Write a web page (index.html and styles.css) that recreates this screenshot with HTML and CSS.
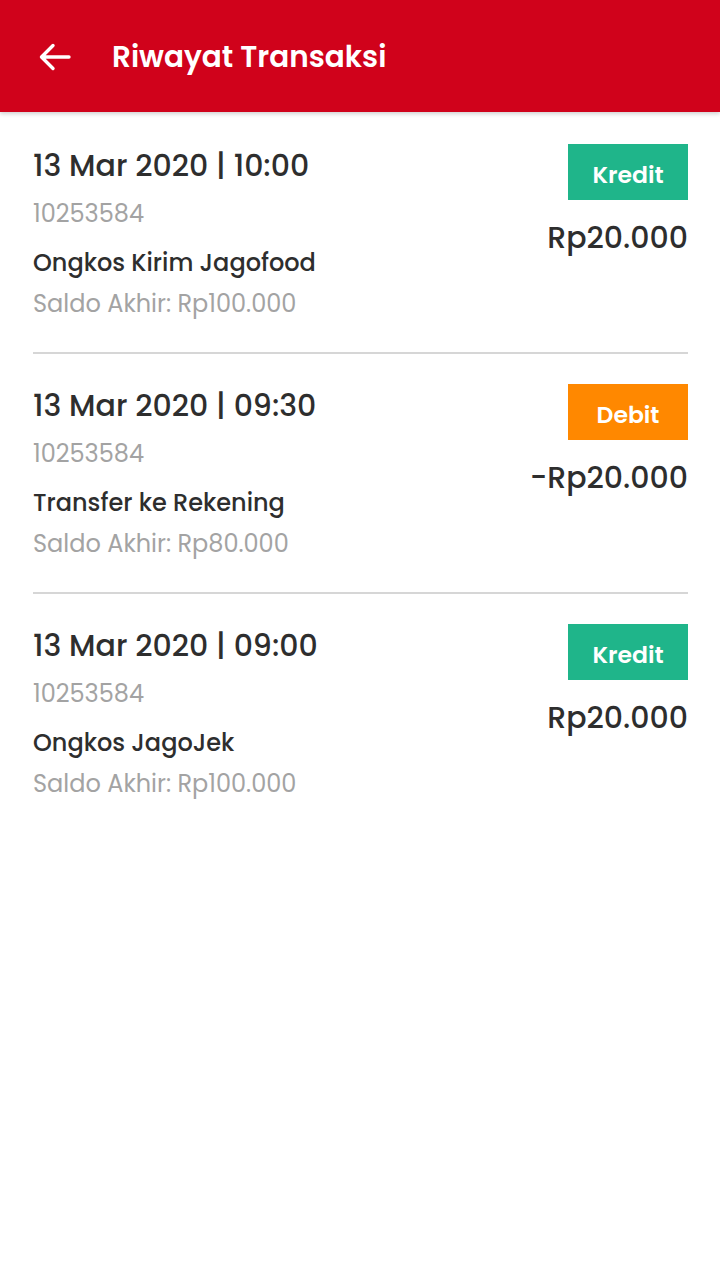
FILE: index.html
```html
<!DOCTYPE html>
<html lang="id">
<head>
<meta charset="utf-8">
<title>Riwayat Transaksi</title>
<link rel="stylesheet" href="styles.css">
</head>
<body>
<header class="appbar">
  <svg class="back" width="34" height="30" viewBox="0 0 34 30" aria-hidden="true">
    <path d="M31 15H4M15 3.5L3.5 15L15 26.5" fill="none" stroke="#fff" stroke-width="3.4" stroke-linecap="round" stroke-linejoin="round"/>
  </svg>
  <h1 class="title">Riwayat Transaksi</h1>
</header>
<main class="list">
  <section class="item">
    <div class="info">
      <div class="date">13 Mar 2020 | 10:00</div>
      <div class="ref">10253584</div>
      <div class="desc">Ongkos Kirim Jagofood</div>
      <div class="saldo">Saldo Akhir: Rp100.000</div>
    </div>
    <div class="side">
      <span class="badge kredit">Kredit</span>
      <span class="amount">Rp20.000</span>
    </div>
  </section>
  <section class="item">
    <div class="info">
      <div class="date">13 Mar 2020 | 09:30</div>
      <div class="ref">10253584</div>
      <div class="desc">Transfer ke Rekening</div>
      <div class="saldo">Saldo Akhir: Rp80.000</div>
    </div>
    <div class="side">
      <span class="badge debit">Debit</span>
      <span class="amount">-Rp20.000</span>
    </div>
  </section>
  <section class="item">
    <div class="info">
      <div class="date">13 Mar 2020 | 09:00</div>
      <div class="ref">10253584</div>
      <div class="desc">Ongkos JagoJek</div>
      <div class="saldo">Saldo Akhir: Rp100.000</div>
    </div>
    <div class="side">
      <span class="badge kredit">Kredit</span>
      <span class="amount">Rp20.000</span>
    </div>
  </section>
</main>
</body>
</html>
```
FILE: styles.css
```css
* { box-sizing: border-box; }
html, body { margin: 0; padding: 0; background: #fff; }
body {
  width: 720px;
  min-height: 1280px;
  font-family: "Poppins", "Open Sans", "Noto Sans", sans-serif;
  color: #333;
}
.appbar {
  height: 112px;
  background: #d0021b;
  display: flex;
  align-items: center;
  padding-left: 38px;
  gap: 40px;
  box-shadow: 0 2px 4px rgba(0,0,0,0.18);
  position: relative;
  z-index: 1;
}
.back { display: block; flex: none; margin-top: 1px; }
.title {
  margin: 0;
  color: #fff;
  font-size: 29.5px;
  line-height: 40px;
  font-weight: 600;
  margin-top: 2px;
}
.list { padding: 0 32px 0 33px; }
.item {
  display: flex;
  justify-content: space-between;
  padding-top: 32px;
  height: 240px;
}
.item + .item {
  border-top: 2px solid #d6d6d6;
  padding-top: 30px;
}
.info { display: flex; flex-direction: column; }
.date { font-size: 30px; line-height: 40px; font-weight: 500; color: #2e2e2e; margin-top: 2px; }
.ref { font-size: 24px; line-height: 32px; color: #a3a3a3; margin-top: 12px; }
.desc { font-size: 24px; line-height: 32px; font-weight: 500; color: #2e2e2e; margin-top: 17px; }
.saldo { font-size: 24px; line-height: 32px; color: #a3a3a3; margin-top: 9px; }
.side { display: flex; flex-direction: column; align-items: flex-end; }
.badge {
  width: 120px;
  height: 56px;
  display: flex;
  align-items: center;
  justify-content: center;
  color: #fff;
  font-size: 23.5px;
  line-height: 32px;
  font-weight: 600;
  padding-top: 5px;
}
.kredit { background: #1fb58a; }
.debit { background: #ff8800; }
.amount { font-size: 30px; line-height: 40px; font-weight: 500; color: #2e2e2e; margin-top: 18px; }
```
